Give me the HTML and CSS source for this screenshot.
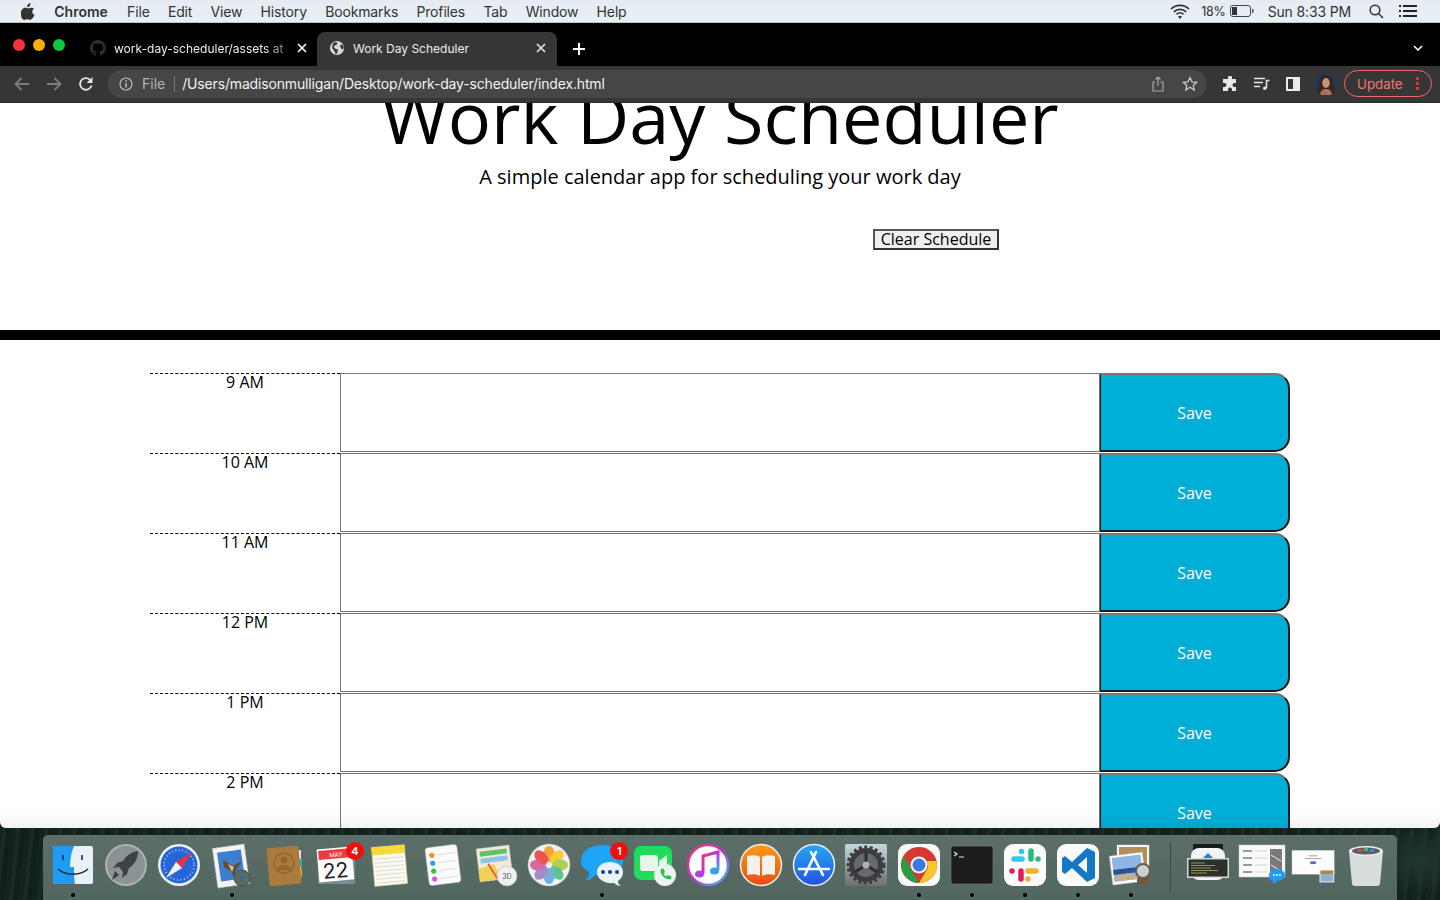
FILE: index.html
```html
<!DOCTYPE html>
<html lang="en">
<head>
  <meta charset="utf-8">
  <title>Work Day Scheduler</title>
  <link rel="stylesheet" href="styles.css">
</head>
<body>
<div class="desktop">

  <!-- mac menu bar -->
  <div class="menubar">
    <svg class="apple" width="14" height="17" viewBox="0 0 14 17"><path fill="#333" d="M9.6 0c.1 1.100-.3 2.100-.9 2.900-.6.700-1.600 1.300-2.600 1.200-.1-1 .4-2.100 1-2.800C7.700.6 8.800.1 9.600 0zM13 5.800c-1 .6-1.700 1.600-1.700 2.900 0 1.500.9 2.600 2.200 3.100-.3 1-.8 1.900-1.400 2.800-.8 1.200-1.700 2.300-2.900 2.300-1.100 0-1.500-.7-2.900-.7-1.300 0-1.800.7-2.900.7-1.200 0-2.100-1.200-2.900-2.400C-.2 12 -.6 8.300 1.200 6.300c.8-1 2-1.600 3.200-1.600 1.200 0 2 .7 3 .7s1.600-.7 3-.7c1.100 0 2.200.4 2.600 1.100z"/></svg>
    <b class="menu-app">Chrome</b>
    <span>File</span><span>Edit</span><span>View</span><span>History</span><span>Bookmarks</span><span>Profiles</span><span>Tab</span><span>Window</span><span>Help</span>
    <div class="menu-right">
      <svg class="wifi" width="20" height="15" viewBox="0 0 20 15" fill="none" stroke="#333" stroke-width="1.700"><path d="M1 5a13 13 0 0 1 18 0M3.800 7.800a9 9 0 0 1 12.400 0M6.500 10.400a5 5 0 0 1 7 0"/><path fill="#333" stroke="none" d="M10 15l-2-2.400a3 3 0 0 1 4 0z"/></svg>
      <span class="batt-pct">18%</span>
      <svg class="batt" width="24" height="12" viewBox="0 0 24 12"><rect x=".5" y=".5" width="20" height="11" rx="2.500" fill="none" stroke="#444"/><rect x="2" y="2" width="5" height="8" fill="#333"/><rect x="22" y="4" width="1.500" height="4" fill="#555"/></svg>
      <span class="clock">Sun 8:33 PM</span>
      <svg class="spot" width="15" height="15" viewBox="0 0 15 15" fill="none" stroke="#333" stroke-width="1.500"><circle cx="6" cy="6" r="4.800"/><path d="M9.500 9.500L14 14"/></svg>
      <svg width="18" height="12" viewBox="0 0 18 12" stroke="#222" stroke-width="2"><path d="M0 1h2M4 1h14M0 6h2M4 6h14M0 11h2M4 11h14"/></svg>
    </div>
  </div>

  <!-- tabs -->
  <div class="tabstrip">
    <div class="lights"><i class="red"></i><i class="yellow"></i><i class="green"></i></div>
    <div class="tab">
      <svg class="favicon" width="16" height="16" viewBox="0 0 16 16"><path fill="#2b3036" d="M8 0a8 8 0 0 0-2.500 15.600c.4.100.5-.2.500-.4v-1.400c-2.200.5-2.700-1-2.700-1-.4-.9-.9-1.200-.9-1.200-.7-.5.100-.5.100-.5.800.1 1.200.8 1.200.8.700 1.200 1.900.9 2.300.7.100-.5.300-.9.500-1.100-1.800-.2-3.600-.9-3.600-4 0-.9.300-1.600.8-2.100-.1-.2-.4-1 .1-2.100 0 0 .7-.2 2.200.8a7.600 7.600 0 0 1 4 0c1.500-1 2.200-.8 2.200-.8.400 1.100.2 1.900.1 2.100.5.600.8 1.300.8 2.100 0 3.100-1.900 3.700-3.700 3.900.3.300.6.800.6 1.500v2.200c0 .2.100.5.600.4A8 8 0 0 0 8 0z"/></svg>
      <span class="tab-title tab-fade">work-day-scheduler/assets at</span>
      <svg class="tab-x" width="10" height="10" viewBox="0 0 10 10" stroke="#fff" stroke-width="1.600"><path d="M1 1l8 8M9 1l-8 8"/></svg>
    </div>
    <div class="tab tab-active">
      <svg class="favicon" width="16" height="16" viewBox="0 0 16 16"><circle cx="8" cy="8" r="7" fill="#d8d8d8"/><path fill="#3a3a3a" d="M4 3l3-1 1.500 1-1 2-2 .5-.5 2 2 1.500 2 .5-.5 3-1.500 2-1-2-1-2-2-2.500zM11 5l2.500-.5L15 8l-2 1.500-1.500-2z"/></svg>
      <span class="tab-title">Work Day Scheduler</span>
      <svg class="tab-x" width="10" height="10" viewBox="0 0 10 10" stroke="#e8e8e8" stroke-width="1.600"><path d="M1 1l8 8M9 1l-8 8"/></svg>
    </div>
    <svg class="newtab" width="12" height="12" viewBox="0 0 12 12" stroke="#fff" stroke-width="2"><path d="M6 0v12M0 6h12"/></svg>
    <svg class="tabmenu" width="10" height="6" viewBox="0 0 10 6" fill="none" stroke="#fff" stroke-width="1.600"><path d="M1 1l4 4 4-4"/></svg>
  </div>

  <!-- address bar -->
  <div class="toolbar">
    <svg class="nav" width="16" height="14" viewBox="0 0 16 14" fill="none" stroke="#7c7c7c" stroke-width="1.800"><path d="M15 7H2M7.500 1L1.500 7l6 6"/></svg>
    <svg class="nav" width="16" height="14" viewBox="0 0 16 14" fill="none" stroke="#7c7c7c" stroke-width="1.800"><path d="M1 7h13M8.500 1l6 6-6 6"/></svg>
    <svg class="nav" width="16" height="16" viewBox="0 0 16 16" fill="none" stroke="#e4e4e4" stroke-width="1.800"><path d="M13.500 9.500A5.800 5.800 0 1 1 12 3.800"/><path fill="#e4e4e4" stroke="none" d="M14.500 1v6h-6z"/></svg>
    <div class="omnibox">
      <svg width="14" height="14" viewBox="0 0 14 14" fill="none" stroke="#bdbdbd" stroke-width="1.200"><circle cx="7" cy="7" r="6"/><path stroke-width="1.500" d="M7 6v4.500M7 3.300v1.500"/></svg>
      <span class="scheme">File</span>
      <span class="omni-div"></span>
      <span class="url">/Users/madisonmulligan/Desktop/work-day-scheduler/index.html</span>
      <svg class="share" width="12" height="16" viewBox="0 0 12 16" fill="none" stroke="#a8a8a8" stroke-width="1.200"><path d="M3.500 6H1v9h10V6H8.500M6 10V1M3.500 3.500L6 1l2.500 2.500"/></svg>
      <svg class="star" width="16" height="15" viewBox="0 0 16 15" fill="none" stroke="#c4c4c4" stroke-width="1.300"><path d="M8 1.500l2 4.300 4.700.5-3.500 3.200 1 4.600L8 11.300l-4.200 2.800 1-4.600L1.300 6.300 6 5.800z"/></svg>
    </div>
    <div class="tools">
      <svg width="16" height="16" viewBox="0 0 16 16"><path fill="#e6e6e6" d="M6 1.500a2 2 0 0 1 4 0V3h4v4h-1.500a2 2 0 0 0 0 4H14v4h-4v-1.500a2 2 0 0 0-4 0V15H1v-4h1.500a2 2 0 0 0 0-4H1V3h5z"/></svg>
      <svg width="16" height="14" viewBox="0 0 16 14" stroke="#e6e6e6" stroke-width="1.500" fill="none"><path d="M0 1.500h11M0 5.500h9M0 9.500h6"/><path d="M12.500 11V3.500h3"/><circle cx="10.800" cy="11.300" r="1.800" fill="#e6e6e6" stroke="none"/></svg>
      <svg width="14" height="14" viewBox="0 0 14 14"><rect x="1" y="1" width="12" height="12" fill="#333" stroke="#ececec" stroke-width="2"/><rect x="7" y="1" width="6" height="12" fill="#ececec"/></svg>
      <svg class="avatar" width="22" height="22" viewBox="0 0 22 22"><circle cx="11" cy="11" r="11" fill="#1b3a5c"/><path fill="#3c241c" d="M3 21C2 9 5 2 11 2s9 7 8 19z"/><ellipse cx="11" cy="10" rx="3.700" ry="5" fill="#c4957f"/><path fill="#a8705e" d="M5 21c1-4 3-5 6-5s5 1 6 5a11 11 0 0 1-12 0z"/></svg>
      <div class="update">Update<svg width="3" height="13" viewBox="0 0 3 13" fill="#e5322d"><rect width="3" height="3"/><rect y="5" width="3" height="3"/><rect y="10" width="3" height="3"/></svg></div>
    </div>
  </div>

  <!-- the page itself, scrolled down a little -->
  <div class="page">
    <header class="jumbotron">
      <h1 class="title">Work Day Scheduler</h1>
      <p class="lead">A simple calendar app for scheduling your work day</p>
      <div class="clear-row"><button class="clear-btn">Clear Schedule</button></div>
    </header>

    <div class="container">
      <div class="row"><div class="hour">9 AM</div><textarea class="description"></textarea><button class="saveBtn">Save</button></div>
      <div class="row"><div class="hour">10 AM</div><textarea class="description"></textarea><button class="saveBtn">Save</button></div>
      <div class="row"><div class="hour">11 AM</div><textarea class="description"></textarea><button class="saveBtn">Save</button></div>
      <div class="row"><div class="hour">12 PM</div><textarea class="description"></textarea><button class="saveBtn">Save</button></div>
      <div class="row"><div class="hour">1 PM</div><textarea class="description"></textarea><button class="saveBtn">Save</button></div>
      <div class="row"><div class="hour">2 PM</div><textarea class="description"></textarea><button class="saveBtn">Save</button></div>
    </div>
  </div>

  <!-- dock -->
  <div class="dock">
    <div class="slot on"><svg viewBox="0 0 44 44"><rect x="2" y="3" width="40" height="38" rx="2" fill="#e8f1f8"/><path fill="#1e9bf5" d="M4 3h19c-3 7-4 14-4 21h4c0 6 0 11 1 17H4a2 2 0 0 1-2-2V5a2 2 0 0 1 2-2z"/><path d="M12 12v5M31 12v5" stroke="#123" stroke-width="1.500"/><path d="M7 26c8 7 22 7 30 0" fill="none" stroke="#123" stroke-width="1.500"/></svg></div>
    <div class="slot"><svg viewBox="0 0 44 44"><circle cx="22" cy="22" r="21" fill="#aeb4b6"/><circle cx="22" cy="22" r="19" fill="#8b9294"/><path fill="#3d4246" d="M34 8c-7 1-12 5-15 10l-6 2-4 5 6-1 4 5-1 6 5-4 2-6c5-3 9-9 9-17z"/><path fill="#3d4246" d="M11 28l4 4-7 5z"/></svg></div>
    <div class="slot"><svg viewBox="0 0 44 44"><circle cx="22" cy="22" r="21" fill="#eef2f5"/><circle cx="22" cy="22" r="18.500" fill="#2565d8"/><circle cx="22" cy="22" r="15" fill="none" stroke="#a9c7f5" stroke-width="2" stroke-dasharray="1 2.500"/><path fill="#e8333a" d="M35 9L19 19l6 6z"/><path fill="#f2f2f2" d="M9 35l10-16 6 6z"/></svg></div>
    <div class="slot on"><svg viewBox="0 0 44 44"><rect x="5" y="3" width="32" height="40" fill="#f4f4f4" stroke="#bbb" stroke-dasharray="2 1.500" transform="rotate(-8 21 23)"/><rect x="9" y="8" width="24" height="29" fill="#3a7fd0" transform="rotate(-8 21 23)"/><path fill="#6a4a28" d="M13 17l10 6 9-5-6 9-2 7-3-6-7-4z"/><path fill="#d9c29a" d="M18 21l6 3-2 5z"/><circle cx="32" cy="35" r="8" fill="#5a6b66" stroke="#46524e"/><circle cx="32" cy="35" r="2.500" fill="#3a6a9a"/></svg></div>
    <div class="slot"><svg viewBox="0 0 44 44"><rect x="33" y="7" width="5" height="30" fill="#ddd"/><rect x="36" y="16" width="3" height="8" fill="#35b0a0"/><rect x="36" y="26" width="3" height="8" fill="#f0a030"/><rect x="5" y="4" width="32" height="38" rx="2" fill="#ad7a3e" transform="rotate(-5 21 23)"/><circle cx="21" cy="20" r="10" fill="none" stroke="#93652f" stroke-width="1.500"/><circle cx="21" cy="17" r="3.500" fill="#93652f"/><path fill="#93652f" d="M14 27c1-4 4-5 7-5s6 1 7 5z"/></svg></div>
    <div class="slot badged"><svg viewBox="0 0 44 44"><rect x="3" y="6" width="37" height="35" rx="1" fill="#7c8a92"/><rect x="3" y="5" width="35" height="33" fill="#fff" transform="rotate(-5 20 22)"/><path d="M3 8l34-3 1 9-34 3z" fill="#ec3d3d"/><text x="21" y="14" class="cal-month" transform="rotate(-5 21 14)">MAY</text><text x="21" y="35" class="cal-day" transform="rotate(-5 21 33)">22</text></svg><em class="badge">4</em></div>
    <div class="slot"><svg viewBox="0 0 44 44"><g transform="rotate(-5 22 22)"><rect x="5" y="3" width="33" height="39" fill="#fbfaf0" stroke="#c9c08a" stroke-width=".6"/><rect x="5" y="3" width="33" height="8" fill="#f8d937"/><path stroke="#cfcfc8" stroke-width=".7" d="M7 15h29M7 19h29M7 23h29M7 27h29M7 31h29M7 35h29M7 39h29"/></g></svg></div>
    <div class="slot"><svg viewBox="0 0 44 44"><g transform="rotate(-7 22 22)"><rect x="6" y="3" width="32" height="38" rx="3" fill="#fbfbfb" stroke="#bbb" stroke-width=".5"/><circle cx="12" cy="11" r="2.600" fill="#f4902a"/><circle cx="12" cy="19" r="2.600" fill="#2f9cf0"/><circle cx="12" cy="27" r="2.600" fill="#2fc23f"/><circle cx="12" cy="35" r="2.600" fill="#d656d6"/><path stroke="#ddd" d="M17 11h18M17 19h18M17 27h18M17 35h18"/></g></svg></div>
    <div class="slot"><svg viewBox="0 0 44 44"><g transform="rotate(-7 20 20)"><rect x="4" y="4" width="33" height="33" fill="#f2ead6" stroke="#ccc" stroke-width=".5"/><rect x="7" y="7" width="27" height="5" fill="#5ec26a"/><rect x="7" y="14" width="27" height="5" fill="#8fc3ea"/><path fill="#f2cf55" d="M4 24l16-3 6 16H4z"/><path stroke="#d94b4b" stroke-width="1.500" d="M14 20l8 17"/></g><circle cx="33" cy="33" r="10" fill="#eef0f0" stroke="#bbb" stroke-width=".7"/><text x="33" y="36" class="maps-3d">3D</text></svg></div>
    <div class="slot"><svg viewBox="0 0 44 44"><circle cx="22" cy="22" r="21" fill="#f1f1f1" stroke="#bbb" stroke-width=".5"/><g opacity=".88"><ellipse cx="22" cy="11" rx="5.500" ry="8" fill="#f89a1d"/><ellipse cx="22" cy="11" rx="5.500" ry="8" fill="#f9c81e" transform="rotate(45 22 22)"/><ellipse cx="22" cy="11" rx="5.500" ry="8" fill="#a3cc3e" transform="rotate(90 22 22)"/><ellipse cx="22" cy="11" rx="5.500" ry="8" fill="#48bf83" transform="rotate(135 22 22)"/><ellipse cx="22" cy="11" rx="5.500" ry="8" fill="#5fa8e2" transform="rotate(180 22 22)"/><ellipse cx="22" cy="11" rx="5.500" ry="8" fill="#9a7fc4" transform="rotate(225 22 22)"/><ellipse cx="22" cy="11" rx="5.500" ry="8" fill="#d25a92" transform="rotate(270 22 22)"/><ellipse cx="22" cy="11" rx="5.500" ry="8" fill="#ea3f42" transform="rotate(315 22 22)"/></g></svg></div>
    <div class="slot on badged"><svg viewBox="0 0 44 44"><path fill="#1fa5f8" d="M22 2c11 0 21 6 21 16 0 9-9 15-19 15-3 0-6 0-9-1-2 3-5 5-9 5 2-2 3-5 3-8C4 26 1 23 1 18 1 8 11 2 22 2z"/><path fill="#e8f2f8" d="M30 19c7 0 13 4 13 10 0 4-2 7-5 9 0 2 1 4 3 5-3 0-5-1-7-3-8 1-17-3-17-11 0-6 6-10 13-10z"/><circle cx="23" cy="29" r="2" fill="#15428a"/><circle cx="30" cy="29" r="2" fill="#15428a"/><circle cx="37" cy="29" r="2" fill="#15428a"/></svg><em class="badge">1</em></div>
    <div class="slot"><svg viewBox="0 0 44 44"><rect x="1" y="3" width="38" height="34" rx="7" fill="#1fdc5c"/><rect x="7" y="12" width="18" height="16" rx="3" fill="#e9f5ea"/><path fill="#e9f5ea" d="M26 18l8-6v16l-8-6z"/><circle cx="32" cy="32" r="11" fill="#eef2ee"/><path fill="#1fc24f" d="M28 26l2.500-.5 1.500 3.500-1.500 1.500c.7 1.500 1.500 2.300 3 3l1.500-1.500 3.500 1.500-.5 2.500c-5 2-12-5-10-10z"/></svg></div>
    <div class="slot"><svg viewBox="0 0 44 44"><defs><linearGradient id="ring" x1="0" y1="0" x2="1" y2="1"><stop offset="0" stop-color="#f33a6a"/><stop offset=".5" stop-color="#c02fd8"/><stop offset="1" stop-color="#2fc8ea"/></linearGradient></defs><circle cx="22" cy="22" r="20" fill="#fff" stroke="url(#ring)" stroke-width="2.500"/><path fill="none" stroke="url(#ring)" stroke-width="3" d="M17 31V13l15-4v18"/><ellipse cx="13.500" cy="31" rx="4.500" ry="3.500" fill="#b23fe0"/><ellipse cx="28.500" cy="28" rx="4.500" ry="3.500" fill="#3a9fe8"/></svg></div>
    <div class="slot"><svg viewBox="0 0 44 44"><defs><linearGradient id="books" x1="0" y1="0" x2="0" y2="1"><stop offset="0" stop-color="#fb9d14"/><stop offset="1" stop-color="#ec4a12"/></linearGradient></defs><circle cx="22" cy="22" r="20.500" fill="url(#books)" stroke="#efefef" stroke-width="1.500"/><path fill="#f5f1ea" d="M21 14c-3-2-8-2-13-1v19c5-1 10-1 13 1zM23 14c3-2 8-2 13-1v19c-5-1-10-1-13 1z"/></svg></div>
    <div class="slot"><svg viewBox="0 0 44 44"><defs><linearGradient id="astore" x1="0" y1="0" x2="0" y2="1"><stop offset="0" stop-color="#24a8f5"/><stop offset="1" stop-color="#2451e0"/></linearGradient></defs><circle cx="22" cy="22" r="20.500" fill="url(#astore)" stroke="#eef" stroke-width="1.500"/><path stroke="#fff" stroke-width="2.600" stroke-linecap="round" fill="none" d="M24 9l-11 23M19 9l12 23M7 26h30"/></svg></div>
    <div class="slot"><svg viewBox="0 0 44 44"><defs><linearGradient id="prefs" x1="0" y1="0" x2="0" y2="1"><stop offset="0" stop-color="#c5d8de"/><stop offset="1" stop-color="#6e6e6e"/></linearGradient></defs><rect x="1" y="1" width="42" height="42" rx="2" fill="url(#prefs)"/><circle cx="22" cy="22" r="17" fill="#3b3d40"/><circle cx="22" cy="22" r="18" fill="none" stroke="#3b3d40" stroke-width="3" stroke-dasharray="3 2.500"/><circle cx="22" cy="22" r="12" fill="#66696d"/><path stroke="#2c2e30" stroke-width="3" d="M22 22V9M22 22L11 29M22 22l11 7"/><circle cx="22" cy="22" r="3.500" fill="#b0b2b5"/></svg></div>
    <div class="slot on"><svg viewBox="0 0 44 44"><rect x="1" y="1" width="42" height="42" rx="9" fill="#f8f8f8"/><circle cx="22" cy="22" r="18" fill="#d8382f"/><path fill="#27a045" d="M6.500 13L15 28l7 11.900A18 18 0 0 1 6.500 13z"/><path fill="#f8c52a" d="M40 22a18 18 0 0 1-18 18l9-15.500-1-6.500h9a18 18 0 0 1 1 4z"/><circle cx="22" cy="22" r="8.500" fill="#fff"/><circle cx="22" cy="22" r="6.500" fill="#3c78e0"/></svg></div>
    <div class="slot on"><svg viewBox="0 0 44 44"><rect x="1" y="3" width="42" height="38" rx="2" fill="#1c1c1c" stroke="#777" stroke-width=".7"/><path fill="none" stroke="#e8e8e8" stroke-width="1.200" d="M4 9l3 2-3 2M9 14h5"/></svg></div>
    <div class="slot on"><svg viewBox="0 0 44 44"><rect x="1" y="1" width="42" height="42" rx="9" fill="#fbfbfb"/><g stroke-width="5.500" stroke-linecap="round"><path stroke="#37c5f0" d="M11 16h8"/><path stroke="#37c5f0" d="M18.500 8.500v0"/><path stroke="#2eb67d" d="M28 8v8"/><path stroke="#2eb67d" d="M35 16v0"/><path stroke="#ecb22e" d="M25 28h8"/><path stroke="#ecb22e" d="M25 36v0"/><path stroke="#e01e5a" d="M18 28v8"/><path stroke="#e01e5a" d="M9 28v0"/></g></svg></div>
    <div class="slot on"><svg viewBox="0 0 44 44"><rect x="1" y="1" width="42" height="42" rx="9" fill="#fbfbfb"/><path fill="#1478c8" d="M31 5l8 4v26l-8 4-15-14-7 6-3-2V15l3-2 7 6zM31 14l-9 8 9 8z"/></svg></div>
    <div class="slot on"><svg viewBox="0 0 44 44"><rect x="8" y="2" width="32" height="28" fill="#fdfdfb" stroke="#ccc" stroke-width=".5"/><rect x="10" y="4" width="28" height="22" fill="#b09058"/><g transform="rotate(-7 20 25)"><rect x="2" y="11" width="33" height="29" fill="#fdfdfb" stroke="#ccc" stroke-width=".5"/><rect x="4" y="13" width="29" height="24" fill="#8eb6e4"/><rect x="4" y="25" width="29" height="5" fill="#2f4f94"/><path fill="#c8ae84" d="M4 33l14-3 15 7H4z"/></g><circle cx="34" cy="28" r="7" fill="#c8d2d8" stroke="#6a5a46" stroke-width="2"/><rect x="28" y="34" width="12" height="8" rx="3" fill="#6a5a46"/></svg></div>
    <div class="dock-sep"></div>
    <div class="slot"><svg viewBox="0 0 44 44"><rect x="7" y="1" width="30" height="8" fill="#1b1b1b"/><rect x="5" y="5" width="34" height="32" rx="8" fill="#f3f6f8"/><path fill="#1f82d8" d="M17 15l5-5 5 5z"/><rect x="1" y="15" width="42" height="20" fill="#d9d9d9"/><rect x="2.500" y="16.500" width="39" height="17" fill="#2c3028"/><path stroke="#a7b26a" stroke-width=".8" d="M5 20h14M5 22.500h24M5 25h20M5 27.500h27M5 30h16"/></svg></div>
    <div class="slot"><svg viewBox="0 0 44 44"><rect x="0" y="2" width="46" height="32" fill="#fafafa" stroke="#ccc" stroke-width=".5"/><path stroke="#9a9a9a" stroke-width="2" d="M4 8h9M4 15h9M4 22h9M4 29h9"/><path stroke="#d4d4d4" d="M16 8h12M16 15h12M16 22h12M16 29h12"/><rect x="31" y="6" width="12" height="26" fill="#7a7a78"/><path stroke="#eee" d="M32 12l10 6M32 22l10 6"/><path fill="#1f9bf8" d="M38 26c5 0 8 3 8 6s-3 6-8 6c-1 2-3 3-5 3 1-1 1-2 1-3-3-1-4-3-4-6 0-3 3-6 8-6z"/><circle cx="35" cy="32" r="1" fill="#fff"/><circle cx="38" cy="32" r="1" fill="#fff"/><circle cx="41" cy="32" r="1" fill="#fff"/></svg></div>
    <div class="slot"><svg viewBox="0 0 48 44"><rect x="0" y="6" width="46" height="26" fill="#fdfdfd" stroke="#ccc" stroke-width=".5"/><path stroke="#999" d="M18 12h10M14 15h18"/><rect x="20" y="18" width="6" height="3" fill="#6a5ad0"/><rect x="30" y="27" width="16" height="14" fill="#f0efe8"/><rect x="31" y="32" width="14" height="8" fill="#8eb0d8"/><rect x="31" y="28" width="14" height="4" fill="#a88858"/></svg></div>
    <div class="slot"><svg viewBox="0 0 44 44"><path fill="#d8dcdc" d="M5 8h34l-3 33a3 3 0 0 1-3 2H11a3 3 0 0 1-3-2z"/><ellipse cx="22" cy="8" rx="17" ry="5" fill="#eceeee"/><ellipse cx="22" cy="8" rx="14" ry="3.500" fill="#57606a"/><path fill="#d84a4a" d="M14 6h4v3h-4z"/><path fill="#48b06a" d="M20 5h4v3h-4z"/><path fill="#4a80d0" d="M26 6h4v3h-4z"/></svg></div>
  </div>

</div>
</body>
</html>
```

FILE: styles.css
```css
* { box-sizing: border-box; }

html, body { margin: 0; height: 100%; overflow: hidden; }

body { font-family: "Open Sans", sans-serif; color: #000; }

.desktop {
  width: 1440px;
  height: 900px;
  display: flex;
  flex-direction: column;
  overflow: hidden;
  background:
    radial-gradient(ellipse at 1420px 860px, #20382f 0, transparent 60px),
    repeating-linear-gradient(96deg, #15231f 0 5px, #1a2b26 5px 9px, #121e1b 9px 14px);
}

/* mac menu bar */
.menubar {
  flex: none;
  height: 23px;
  display: flex;
  align-items: center;
  gap: 18.25px;
  padding: 0 23px 0 21px;
  background: linear-gradient(#e4ebf2, #e9f0f4);
  border-bottom: 1px solid #b9c2ca;
  font: 14px Inter, sans-serif;
  letter-spacing: -.15px;
  color: #333;
  white-space: nowrap;
}
.apple { margin-right: 1px; }
.menu-app { font-weight: 600; margin-right: 1px; letter-spacing: 0; }
.menu-right { margin-left: auto; display: flex; align-items: center; }
.batt-pct { margin-left: 11px; font-size: 12.5px; letter-spacing: -.2px; }
.batt { margin-left: 4px; }
.clock { margin-left: 14px; }
.spot { margin: 0 15px 0 18px; }

/* tabs */
.tabstrip {
  flex: none;
  height: 43px;
  display: flex;
  align-items: flex-end;
  background: #000;
  color: #fff;
  font: 12px Inter, sans-serif;
}
.lights { display: flex; gap: 8px; width: 81px; padding-left: 13px; align-self: flex-start; margin-top: 16px; }
.lights i { width: 12px; height: 12px; border-radius: 50%; }
.red { background: #f5333f; }
.yellow { background: #f9b000; }
.green { background: #0fc73a; }

.tab {
  width: 236px;
  height: 34px;
  display: flex;
  align-items: center;
  padding: 0 10px 2px 9px;
  gap: 8px;
}
.tab-title { flex: 1; overflow: hidden; white-space: nowrap; }
.tab .tab-title { color: #ececec; }
.tab .tab-fade { -webkit-mask-image: linear-gradient(90deg, #000 85%, rgba(0, 0, 0, .35)); mask-image: linear-gradient(90deg, #000 85%, rgba(0, 0, 0, .35)); }
.tab-active { width: 240px; padding: 0 11px 2px 12px; background: #363636; border-radius: 8px 8px 0 0; }
.favicon { flex: none; }
.tab-x { flex: none; }
.newtab { margin: 0 0 11px 16px; }
.tabmenu { margin: 0 17px 15px auto; }

/* address bar */
.toolbar {
  flex: none;
  height: 37px;
  display: flex;
  align-items: center;
  padding: 0 0 1px 14px;
  gap: 16px;
  background: #363636;
  border-bottom: 1px solid #2a2a2a;
}
.nav { flex: none; }
.omnibox {
  flex: none;
  width: 1099px;
  height: 28px;
  margin-left: -2px;
  display: flex;
  align-items: center;
  padding: 0 10px 0 11px;
  border-radius: 14px;
  background: #464646;
  font: 14px Inter, sans-serif;
  white-space: nowrap;
}
.scheme { color: #b4b4b4; margin-left: 9px; }
.omni-div { width: 1px; height: 16px; background: #777; margin: 0 7px 0 9px; }
.url { color: #f2f2f2; letter-spacing: -.16px; }
.share { margin-left: auto; margin-right: 18px; }
.star { margin-right: -1px; }
.tools { flex: none; display: flex; align-items: center; gap: 16px; margin-left: -1px; }
.avatar { margin: 0 -10px 0 -1px; }
.update {
  width: 88px;
  height: 27px;
  display: flex;
  align-items: center;
  justify-content: space-between;
  padding: 0 12px;
  margin-left: 1px;
  border: 1px solid #ef6a66;
  border-radius: 14px;
  color: #ef7672;
  font: 13.3px Inter, sans-serif;
}

/* scheduler page */
.page {
  flex: none;
  position: relative;
  height: 725px;
  overflow: hidden;
  background: #fff;
  border-radius: 0 0 6px 6px;
}
.page::after {
  content: "";
  position: absolute;
  left: 0;
  right: 0;
  bottom: 0;
  height: 16px;
  background: linear-gradient(rgba(0, 0, 0, 0), rgba(0, 0, 0, .05));
}

.jumbotron {
  height: 273px;
  margin-top: -36px;
  text-align: center;
  border-bottom: 10px solid #000;
}
.title { margin: 0; font-size: 72px; font-weight: 400; line-height: 98px; }
.lead { margin: -2px 0 0; font-size: 20px; line-height: 27px; }
.clear-row { text-align: left; padding: 38px 0 0 873px; }
.clear-btn {
  width: 126px;
  height: 21px;
  padding: 0;
  font: 16px/17px "Open Sans", sans-serif;
  color: #000;
  background: #efefef;
  border: 2px solid #333;
  border-top-color: #555;
  border-left-color: #555;
}

.container { width: 1140px; margin: 33px 0 0 150px; }
.row { display: grid; grid-template-columns: 190px 760px 190px; height: 80px; align-items: start; }
.hour {
  height: 80px;
  border-top: 1px dashed #000;
  font-size: 16px;
  line-height: 16px;
  text-align: center;
}
.description {
  display: block;
  width: 760px;
  height: 79px;
  margin: 0;
  padding: 2px;
  resize: none;
  background: #fff;
  border: 1px solid #767676;
}
.saveBtn {
  width: 190px;
  height: 79px;
  padding: 0;
  font: 16px "Open Sans", sans-serif;
  color: #fff;
  background: #00afd6;
  border: 2px solid #1a1a1a;
  border-left-width: 1px;
  border-top-color: #767676;
  border-radius: 0 15px 15px 0;
}

/* dock */
.dock {
  flex: none;
  width: 1354px;
  height: 65px;
  margin: 7px 0 0 43px;
  padding: 8px 0 0 3.6px;
  display: flex;
  align-items: flex-start;
  background: linear-gradient(#5d6e69, #50675f);
  border-radius: 5px 5px 0 0;
}
.slot { position: relative; flex: none; width: 52.9px; height: 57px; }
.slot svg { display: block; width: 44px; height: 44px; margin: 0 auto; overflow: visible; }
.slot.on::after {
  content: "";
  position: absolute;
  left: 24.400px;
  top: 50px;
  width: 4px;
  height: 4px;
  border-radius: 50%;
  background: #000;
}
.badge {
  position: absolute;
  top: -1px;
  right: 0;
  width: 18px;
  height: 18px;
  border-radius: 50%;
  background: #f40d0d;
  color: #fff;
  font: 600 11px/18px Inter, sans-serif;
  text-align: center;
}
.dock-sep { flex: none; width: 1px; height: 48px; margin: 0 10px 0 13px; background: #3c4a46; }
.cal-month { font: 6px Inter, sans-serif; fill: #fff; text-anchor: middle; }
.cal-day { font: 21px Inter, sans-serif; fill: #222; text-anchor: middle; }
.maps-3d { font: 7px Inter, sans-serif; fill: #555; text-anchor: middle; }
```
